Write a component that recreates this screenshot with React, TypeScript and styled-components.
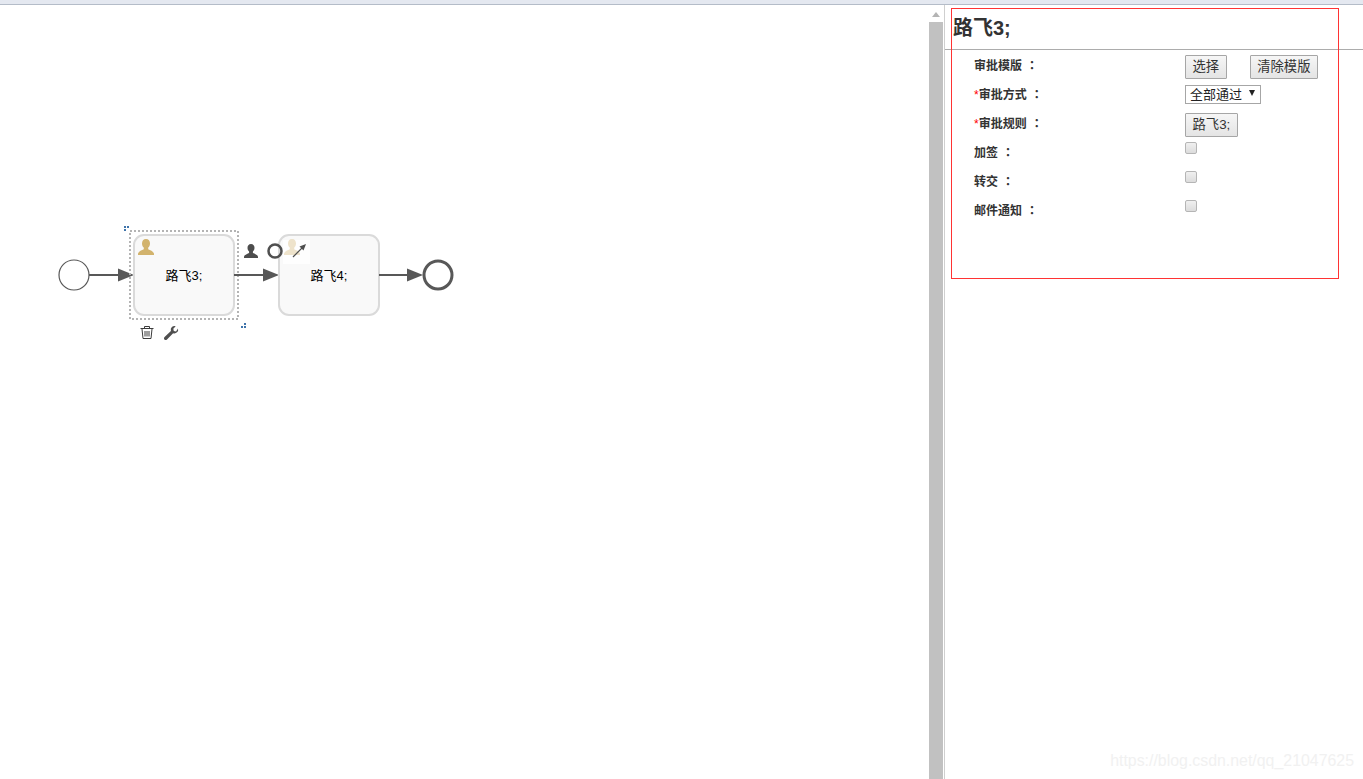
import styled, { createGlobalStyle } from 'styled-components';

const FONT = '"Liberation Sans", "Noto Sans CJK SC", sans-serif';

const GlobalStyle = createGlobalStyle`
  html, body {
    margin: 0;
    padding: 0;
    height: 100%;
    overflow: hidden;
    background: #fff;
    font-family: ${FONT};
  }
`;

export default function App() {
  return (
    <>
      <GlobalStyle />
      <Page>
        <TopBar />
        <Main>
          <Canvas>
            <Diagram />
          </Canvas>
          <ScrollTrack>
            <ScrollArrow />
            <ScrollThumb />
          </ScrollTrack>
          <Panel>
            <PanelTitle>路飞3;</PanelTitle>
            <FormGrid>
              <Label>
                审批模版<Colon>：</Colon>
              </Label>
              <Controls>
                <FormButton>选择</FormButton>
                <FormButton>清除模版</FormButton>
              </Controls>
              <Label>
                <Star>*</Star>审批方式<Colon>：</Colon>
              </Label>
              <Controls>
                <FakeSelect>
                  全部通过
                  <SelectCaret />
                </FakeSelect>
              </Controls>
              <Label>
                <Star>*</Star>审批规则<Colon>：</Colon>
              </Label>
              <Controls>
                <FormButton>路飞3;</FormButton>
              </Controls>
              <Label>
                加签<Colon>：</Colon>
              </Label>
              <Controls>
                <Check type="checkbox" />
              </Controls>
              <Label>
                转交<Colon>：</Colon>
              </Label>
              <Controls>
                <Check type="checkbox" />
              </Controls>
              <Label>
                邮件通知<Colon>：</Colon>
              </Label>
              <Controls>
                <Check type="checkbox" />
              </Controls>
            </FormGrid>
            <RedFrame />
          </Panel>
        </Main>
        <Watermark>https://blog.csdn.net/qq_21047625</Watermark>
      </Page>
    </>
  );
}

function Task({ x, label }: { x: number; label: string }) {
  return (
    <>
      <rect x={x} y={235} width={100} height={80} rx={10} fill="#f9f9f9" stroke="#dadada" strokeWidth={2} />
      <TaskText x={x + 50} y={280} textAnchor="middle">
        {label}
      </TaskText>
    </>
  );
}

function Person({ x, y, fill, size = 16, opacity = 1 }: { x: number; y: number; fill: string; size?: number; opacity?: number }) {
  return (
    <path
      transform={`translate(${x} ${y}) scale(${size / 16})`}
      opacity={opacity}
      fill={fill}
      d="M8 0c-2.600 0-4 2-4 4.400 0 1.800.8 3.300 1.800 4.200v1.600C4 11 .8 12 0 14.600V16h16v-1.400c-.8-2.600-4-3.600-5.800-4.400V8.600c1-.9 1.800-2.400 1.800-4.200C12 2 10.600 0 8 0z"
    />
  );
}

function Diagram() {
  return (
    <DiagramSvg viewBox="0 0 929 779" width={929} height={779}>
      <circle cx={74} cy={275} r={15} fill="#fff" stroke="#585858" strokeWidth={1.2} />
      <Flow d="M89 275H120" />
      <Head d="M118 268.500L134 275L118 281.500Z" />

      <SelectionBox x={130} y={231} width={108} height={88} />
      <Corner d="M124 226h2v2h-2zM127 226h2v2h-2zM124 229h2v2h-2z" />
      <Corner d="M244 323h2v2h-2zM241 326h2v2h-2zM244 326h2v2h-2z" />
      <Task x={134} label="路飞3;" />
      <Person x={138} y={239} fill="#d2b36d" />

      <Flow d="M234 275H265" />
      <Head d="M263 268.500L279 275L263 281.500Z" />
      <Task x={279} label="路飞4;" />

      <rect x={283} y={240} width={27} height={24} fill="#fff" opacity={0.85} />
      <Person x={284} y={239} fill="#d2b36d" opacity={0.35} />
      <Person x={244} y={244} size={14} fill="#4d4d4d" />
      <circle cx={275} cy={251} r={6.5} fill="none" stroke="#4f4f4f" strokeWidth={2.5} />
      <path d="M293 257L304 246" stroke="#4f4f4f" strokeWidth={1.2} />
      <path d="M306 244L299.500 246.500L303.500 250.500Z" fill="#4f4f4f" />

      <Flow d="M379 275H410" />
      <Head d="M407 268.500L423 275L407 281.500Z" />
      <circle cx={438} cy={275} r={14} fill="#fff" stroke="#585858" strokeWidth={3} />

      <path
        d="M140.500 328.500H153.500M144.500 328V326.500H149.500V328M142 329L143 338.500H151L152 329M145 331V336.500M147 331V336.500M149 331V336.500"
        fill="none"
        stroke="#3c3c3c"
        strokeWidth={1}
      />
      <path
        transform="translate(1 2)"
        d="M177 326.500a3.800 3.800 0 0 1-4.900 4.700L166 337.500c-.8.800-2 .8-2.600 0s-.5-1.800.2-2.500l6.300-6.100a3.800 3.800 0 0 1 4.800-4.700l-2.400 2.500.5 2.200 2.200.5z"
        fill="#4f4f4f"
      />
    </DiagramSvg>
  );
}

/* STYLES **********************************************************/

const Page = styled.div`
  position: relative;
  display: flex;
  flex-direction: column;
  width: 1363px;
  height: 779px;
  overflow: hidden;
  background: #fff;
`;

const TopBar = styled.div`
  flex: none;
  height: 4px;
  background: #e4e8f0;
  border-bottom: 1px solid #b4bcc8;
`;

const Main = styled.div`
  flex: 1;
  display: flex;
  min-height: 0;
`;

const Canvas = styled.div`
  flex: none;
  width: 929px;
`;

const DiagramSvg = styled.svg`
  display: block;
  margin-top: -5px;
`;

const TaskText = styled.text`
  font-family: ${FONT};
  font-size: 13px;
  fill: #000;
`;

const Flow = styled.path`
  fill: none;
  stroke: #585858;
  stroke-width: 2;
`;

const Head = styled.path`
  fill: #585858;
`;

const SelectionBox = styled.rect`
  fill: none;
  stroke: #b4b4b4;
  stroke-width: 2;
  stroke-dasharray: 2 2;
`;

const Corner = styled.path`
  fill: #3f74ab;
`;

const ScrollTrack = styled.div`
  flex: none;
  width: 15px;
  display: flex;
  flex-direction: column;
  align-items: flex-start;
  background: #fff;
`;

const ScrollArrow = styled.div`
  flex: none;
  margin: 7px 0 5px 3px;
  border-left: 4px solid transparent;
  border-right: 4px solid transparent;
  border-bottom: 5px solid #b4b4b4;
`;

const ScrollThumb = styled.div`
  flex: 1;
  width: 14px;
  background: #c1c1c1;
`;

const Panel = styled.div`
  position: relative;
  flex: 1;
  border-left: 1px solid #cfcfcf;
`;

const PanelTitle = styled.h2`
  margin: 0;
  height: 44px;
  padding-left: 8px;
  border-bottom: 1px solid #acacac;
  font-size: 20px;
  font-weight: 700;
  line-height: 47px;
  color: #333;
`;

const FormGrid = styled.div`
  display: grid;
  grid-template-columns: 211px 1fr;
  grid-auto-rows: 29px;
  padding: 1px 0 0 29px;
`;

const Label = styled.div`
  margin-top: 1px;
  font-size: 12px;
  font-weight: 700;
  line-height: 29px;
  color: #333;
`;

const Colon = styled.span`
  font-family: "Noto Sans CJK TC", sans-serif;
  line-height: 1;
  margin-left: 4px;
`;

const Star = styled.span`
  color: #f00;
  font-weight: 400;
`;

const Controls = styled.div`
  display: flex;
  align-items: flex-start;
  gap: 23px;
  padding-top: 4px;
`;

const FormButton = styled.button`
  height: 24px;
  padding: 0 6.5px 3px;
  border: 1px solid #a6a6a6;
  border-radius: 1px;
  background: linear-gradient(#f6f6f6, #e4e4e4);
  font-family: ${FONT};
  font-size: 13.33px;
  color: #333;
`;

const FakeSelect = styled.div`
  position: relative;
  box-sizing: border-box;
  width: 76px;
  height: 19px;
  margin-top: 1px;
  padding-left: 4px;
  border: 1px solid #a6a6a6;
  font-size: 13px;
  line-height: 18px;
  color: #222;
  background: #fff;
`;

const SelectCaret = styled.span`
  position: absolute;
  top: 4px;
  right: 5px;
  border-left: 3.5px solid transparent;
  border-right: 3.5px solid transparent;
  border-top: 6px solid #222;
`;

const Check = styled.input`
  appearance: none;
  box-sizing: border-box;
  display: block;
  width: 12px;
  height: 12px;
  margin: 0;
  border: 1px solid #b5b5b5;
  border-radius: 2px;
  background: linear-gradient(#f0f0f0, #dcdcdc);
`;

const RedFrame = styled.div`
  position: absolute;
  top: 3px;
  left: 6px;
  width: 386px;
  height: 269px;
  border: 1px solid #f33;
  pointer-events: none;
`;

const Watermark = styled.div`
  position: absolute;
  right: 9px;
  top: 751px;
  font-size: 15.9px;
  line-height: 20px;
  color: #f1f1f1;
`;
